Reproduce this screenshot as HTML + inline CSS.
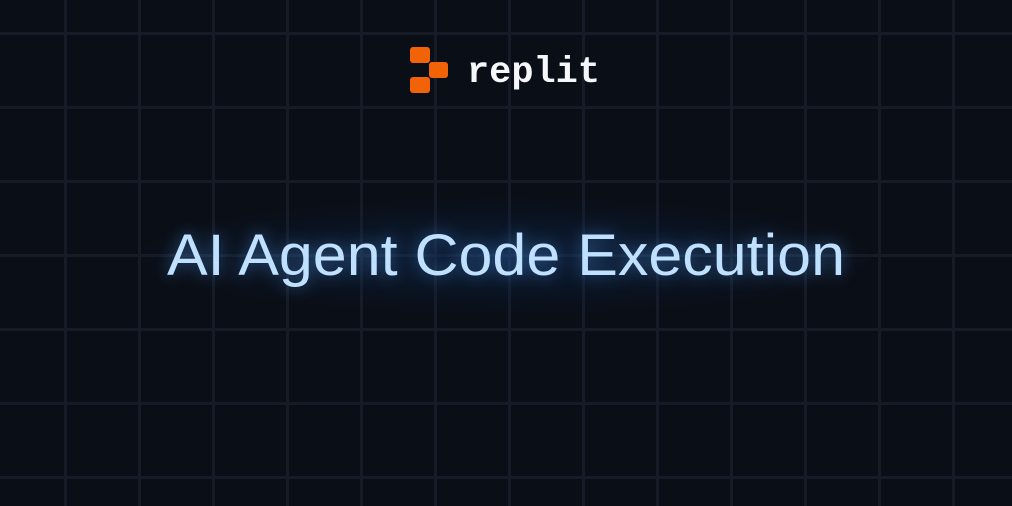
<!DOCTYPE html>
<html><head><meta charset="utf-8"><style>
html,body{margin:0;padding:0;background:#0a0e16;width:1012px;height:506px;overflow:hidden}
.v{position:absolute;top:0;width:3px;height:506px;background:#161b27}
.h{position:absolute;left:0;height:3px;width:1012px;background:#161b27}
svg{position:absolute;left:0;top:0}
</style></head><body>
<div class="v" style="left:64px"></div><div class="v" style="left:138px"></div><div class="v" style="left:212px"></div><div class="v" style="left:286px"></div><div class="v" style="left:360px"></div><div class="v" style="left:434px"></div><div class="v" style="left:508px"></div><div class="v" style="left:582px"></div><div class="v" style="left:656px"></div><div class="v" style="left:730px"></div><div class="v" style="left:804px"></div><div class="v" style="left:878px"></div><div class="v" style="left:952px"></div>
<div class="h" style="top:32px"></div><div class="h" style="top:106px"></div><div class="h" style="top:180px"></div><div class="h" style="top:254px"></div><div class="h" style="top:328px"></div><div class="h" style="top:402px"></div><div class="h" style="top:476px"></div>
<svg width="1012" height="506" viewBox="0 0 1012 506" xmlns="http://www.w3.org/2000/svg">
<defs>
<radialGradient id="glow" cx="50%" cy="50%" r="50%">
<stop offset="0" stop-color="#0c2a55" stop-opacity="0.5"/>
<stop offset="1" stop-color="#0c2a55" stop-opacity="0"/>
</radialGradient>
<filter id="blur" x="-20%" y="-50%" width="140%" height="200%"><feGaussianBlur stdDeviation="8"/></filter>
</defs>
<ellipse cx="506" cy="256" rx="380" ry="60" fill="url(#glow)"/>
<rect x="410" y="47" width="20" height="16" rx="3" fill="#f26207"/>
<rect x="429" y="62" width="19" height="16" rx="3" fill="#f26207"/>
<rect x="410" y="77" width="20" height="16" rx="3" fill="#f26207"/>
<text x="467" y="82" font-family="Liberation Mono, monospace" font-weight="bold" font-size="37" fill="#f5f7fa" textLength="133" lengthAdjust="spacingAndGlyphs">replit</text>
<text x="167" y="275" font-family="Liberation Sans, sans-serif" font-size="58" fill="#4a90e0" opacity="0.6" filter="url(#blur)" textLength="678" lengthAdjust="spacingAndGlyphs">AI Agent Code Execution</text>
<text x="167" y="275" font-family="Liberation Sans, sans-serif" font-size="58" fill="#bfe0ff" textLength="678" lengthAdjust="spacingAndGlyphs">AI Agent Code Execution</text>
</svg>
</body></html>
